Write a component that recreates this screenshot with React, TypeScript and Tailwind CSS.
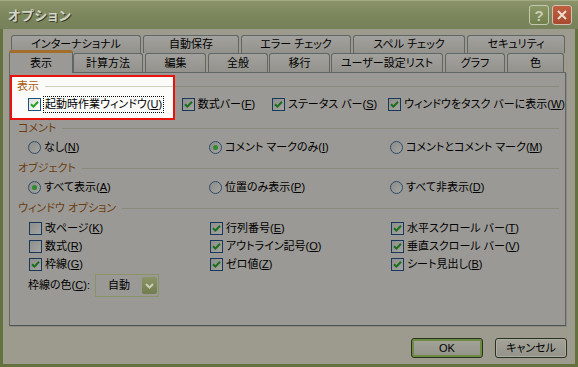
import React from "react";
import clsx from "clsx";

const font = "font-['Liberation_Sans','Noto_Sans_CJK_JP',sans-serif]";

type TabDef = { label: string; cls: string };

const backTabs: TabDef[] = [
  { label: "インターナショナル", cls: "ml-[8px] w-[130px]" },
  { label: "自動保存", cls: "ml-[2px] w-[96px]" },
  { label: "エラー チェック", cls: "ml-[2px] w-[110px]" },
  { label: "スペル チェック", cls: "ml-[2px] w-[112px]" },
  { label: "セキュリティ", cls: "ml-[2px] w-[98px]" },
];

const frontTabs: TabDef[] = [
  { label: "計算方法", cls: "w-[70px]" },
  { label: "編集", cls: "ml-[2px] w-[61px]" },
  { label: "全般", cls: "ml-[2px] w-[60px]" },
  { label: "移行", cls: "ml-[1px] w-[61px]" },
  { label: "ユーザー設定リスト", cls: "ml-[1px] w-[112px]" },
  { label: "グラフ", cls: "ml-[2px] w-[60px]" },
  { label: "色", cls: "ml-[2px] w-[57px]" },
];

function Mn({ text, k, tail }: { text: string; k: string; tail?: string }) {
  return (
    <span className="whitespace-nowrap">
      {text}(<u className="underline-offset-[1px]">{k}</u>){tail}
    </span>
  );
}

function Check({ on, lit }: { on?: boolean; lit?: boolean }) {
  return (
    <span
      className={clsx(
        "flex h-[13px] w-[13px] shrink-0 items-center justify-center border",
        lit
          ? "border-[#1c5180] bg-gradient-to-br from-[#dcdcd7] to-white"
          : "border-[#17385a] bg-gradient-to-br from-[#8e8e8a] to-[#a4a4a1]"
      )}
    >
      {on && (
        <svg width="9" height="9" viewBox="0 0 9 9">
          <path
            d="M1 4.2 L3.4 6.6 L8 1.8"
            fill="none"
            stroke={lit ? "#21a121" : "#1a6e1c"}
            strokeWidth="2"
          />
        </svg>
      )}
    </span>
  );
}

function Radio({ on }: { on?: boolean }) {
  return (
    <span className="flex h-[13px] w-[13px] shrink-0 items-center justify-center rounded-full border border-[#2c4b6a] bg-gradient-to-br from-[#8c8c88] to-[#a3a3a0]">
      {on && <span className="h-[5px] w-[5px] rounded-full bg-[#2f8a2a]" />}
    </span>
  );
}

function Heading({ label, lit }: { label: string; lit?: boolean }) {
  return (
    <div className="flex h-[18px] items-center pl-[8px] pr-[6px]">
      <span className={lit ? "text-[#a85c14]" : "text-[#6c3e12]"}>{label}</span>
      <span className={clsx("ml-[6px] h-px flex-1", lit ? "bg-[#d0d0bf]" : "bg-[#888a7c]")} />
    </div>
  );
}

function Tab({ label, cls }: TabDef) {
  return (
    <div
      className={clsx(
        "flex h-full items-center justify-center rounded-t-[3px] border border-b-0 border-[#5f6665] bg-gradient-to-b from-[#a2a19d] to-[#93928d]",
        cls
      )}
    >
      {label}
    </div>
  );
}

export default function App() {
  return (
    <div className={clsx("flex h-[367px] w-[578px] flex-col bg-[#5f6e3c] text-[11px] leading-none text-black [font-feature-settings:'palt']", font)}>
      {/* title bar */}
      <div className="flex h-[29px] shrink-0 items-center border-t border-[#a2aa82] bg-gradient-to-b from-[#8a9369] via-[#7d875d] to-[#77815a] pl-[8px] pr-[6px]">
        <span className="text-[13px] font-bold tracking-[1px] text-[#d4d5c9] [text-shadow:1px_1px_0_#3b3f2c]">オプション</span>
        <div className="ml-auto flex gap-[3px]">
          <div className="flex h-[20px] w-[20px] items-center justify-center rounded-[3px] border border-[#c2c8ae] bg-gradient-to-b from-[#8b9866] to-[#72804c] text-[15px] font-bold text-[#c9cdb9]">
            ?
          </div>
          <div className="flex h-[20px] w-[20px] items-center justify-center rounded-[3px] border border-[#d2c0b4] bg-gradient-to-b from-[#c0603f] to-[#a84a30]">
            <svg width="12" height="12" viewBox="0 0 12 12">
              <path d="M2 2 L10 10 M10 2 L2 10" stroke="#ecdcd2" strokeWidth="2" />
            </svg>
          </div>
        </div>
      </div>

      {/* body */}
      <div className="flex flex-1 flex-col border-x-[3px] border-b-[3px] border-[#63723f] bg-[#9d9b8d]">
        <div className="mt-[6px] flex h-[18px]">
          {backTabs.map((t) => (
            <Tab key={t.label} {...t} />
          ))}
        </div>
        <div className="flex h-[19px] items-end">
          <div className="relative z-10 -mb-px ml-[6px] flex h-[23px] w-[64px] items-center justify-center rounded-t-[3px] border-x border-t-[3px] border-x-[#5f6665] border-t-[#a36d2c] bg-[#9a9995]">
            表示
          </div>
          {frontTabs.map((t) => (
            <Tab key={t.label} {...t} />
          ))}
        </div>

        {/* panel */}
        <div className="relative ml-[6px] h-[254px] w-[557px] border border-[#5f6665] border-b-[#4f5554] bg-[#9a9995] pt-[4px] shadow-[1px_1px_0_#8a8982]">
          <Heading label="表示" />
          <div className="flex h-[18px] items-center pl-[19px]">
            <div className="flex w-[154px] items-center gap-[3px]">
              <Check on />
              <Mn text="起動時作業ウィンドウ" k="U" />
            </div>
            <div className="flex w-[91px] items-center gap-[3px]">
              <Check on />
              <Mn text="数式バー" k="F" />
            </div>
            <div className="flex w-[117px] items-center gap-[3px]">
              <Check on />
              <Mn text="ステータス バー" k="S" />
            </div>
            <div className="flex items-center gap-[3px]">
              <Check on />
              <Mn text="ウィンドウをタスク バーに表示" k="W" />
            </div>
          </div>

          <div className="mt-[6px]">
            <Heading label="コメント" />
          </div>
          <div className="mt-px grid h-[18px] grid-cols-[181px_181px_1fr] items-center pl-[18px]">
            <div className="flex items-center gap-[3px]">
              <Radio />
              <Mn text="なし" k="N" />
            </div>
            <div className="flex items-center gap-[3px]">
              <Radio on />
              <Mn text="コメント マークのみ" k="I" />
            </div>
            <div className="flex items-center gap-[3px]">
              <Radio />
              <Mn text="コメントとコメント マーク" k="M" />
            </div>
          </div>

          <div className="mt-[3px]">
            <Heading label="オブジェクト" />
          </div>
          <div className="mt-px grid h-[18px] grid-cols-[181px_181px_1fr] items-center pl-[18px]">
            <div className="flex items-center gap-[3px]">
              <Radio on />
              <Mn text="すべて表示" k="A" />
            </div>
            <div className="flex items-center gap-[3px]">
              <Radio />
              <Mn text="位置のみ表示" k="P" />
            </div>
            <div className="flex items-center gap-[3px]">
              <Radio />
              <Mn text="すべて非表示" k="D" />
            </div>
          </div>

          <div className="mt-[3px]">
            <Heading label="ウィンドウ オプション" />
          </div>
          <div className="mt-[2px] grid grid-cols-[181px_181px_1fr] grid-rows-[18px_18px_18px] items-center pl-[19px]">
            <div className="flex items-center gap-[3px]">
              <Check />
              <Mn text="改ページ" k="K" />
            </div>
            <div className="flex items-center gap-[3px]">
              <Check on />
              <Mn text="行列番号" k="E" />
            </div>
            <div className="flex items-center gap-[3px]">
              <Check on />
              <Mn text="水平スクロール バー" k="T" />
            </div>
            <div className="flex items-center gap-[3px]">
              <Check />
              <Mn text="数式" k="R" />
            </div>
            <div className="flex items-center gap-[3px]">
              <Check on />
              <Mn text="アウトライン記号" k="O" />
            </div>
            <div className="flex items-center gap-[3px]">
              <Check on />
              <Mn text="垂直スクロール バー" k="V" />
            </div>
            <div className="flex items-center gap-[3px]">
              <Check on />
              <Mn text="枠線" k="G" />
            </div>
            <div className="flex items-center gap-[3px]">
              <Check on />
              <Mn text="ゼロ値" k="Z" />
            </div>
            <div className="flex items-center gap-[3px]">
              <Check on />
              <Mn text="シート見出し" k="B" />
            </div>
          </div>

          <div className="mt-px flex items-center pl-[18px]">
            <div className="w-[67px]">
              <Mn text="枠線の色" k="C" tail=":" />
            </div>
            <div className="flex h-[23px] w-[64px] items-center justify-between border border-[#8a9468] bg-[#9a9995] pl-[12px] pr-px">
              <span>自動</span>
              <div className="flex h-[17px] w-[15px] items-center justify-center rounded-[2px] bg-gradient-to-b from-[#8a9566] to-[#727d4e]">
                <svg width="9" height="6" viewBox="0 0 9 6">
                  <path d="M1 1 L4.5 4.5 L8 1" fill="none" stroke="#c9cdb8" strokeWidth="2" />
                </svg>
              </div>
            </div>
          </div>

          {/* highlighted region */}
          <div className="absolute left-0 top-[2px] z-20 h-[45px] w-[165px] overflow-hidden border-2 border-[#e8120c] bg-[#fbfbf9]">
            <div className="w-[557px]">
              <div className="flex h-[18px] items-center pl-[5px]">
                <span className="text-[#a85c14]">表示</span>
                <span className="ml-[6px] h-px flex-1 bg-[#d0d0bf]" />
              </div>
              <div className="flex h-[18px] items-center pl-[16px]">
                <Check on lit />
                <span className="ml-[2px] border border-dotted border-black px-px py-[2px]">
                  <Mn text="起動時作業ウィンドウ" k="U" />
                </span>
              </div>
            </div>
          </div>
        </div>

        {/* buttons */}
        <div className="mt-[12px] flex justify-end gap-[12px] pr-[8px]">
          <button className="flex h-[20px] w-[72px] items-center justify-center rounded-[3px] border border-[#28311f] bg-gradient-to-b from-[#a4a398] to-[#94938a] shadow-[inset_0_0_0_2px_#6d8a42]">
            OK
          </button>
          <button className="flex h-[20px] w-[72px] items-center justify-center rounded-[3px] border border-[#28311f] bg-gradient-to-b from-[#a4a398] to-[#94938a] shadow-[inset_0_0_0_1px_#aeada4]">
            キャンセル
          </button>
        </div>
      </div>
    </div>
  );
}
